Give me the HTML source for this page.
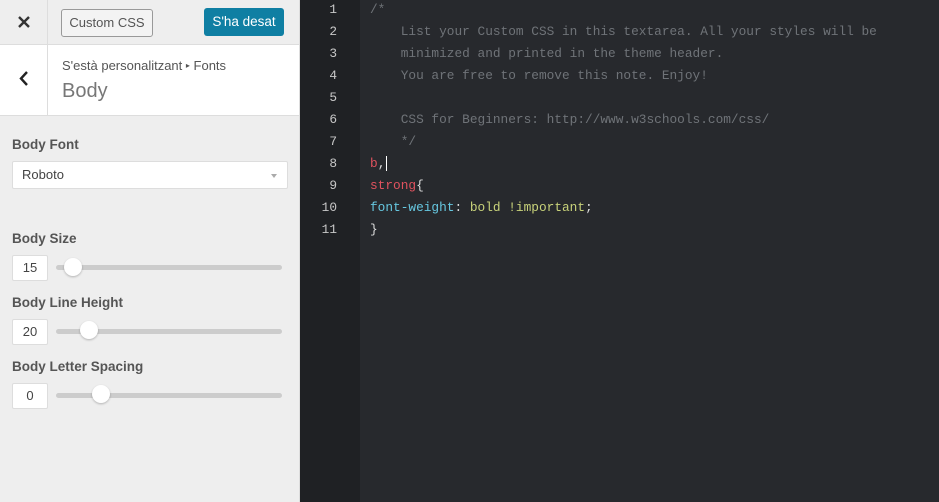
<!DOCTYPE html>
<html><head><meta charset="utf-8"><style>
*{margin:0;padding:0;box-sizing:border-box}
body{width:939px;height:502px;overflow:hidden;font-family:"Liberation Sans",sans-serif;background:#23252a;position:relative}
#side{position:absolute;left:0;top:0;width:300px;height:502px;background:#eeeeee;border-right:1px solid #ddd}
#top{position:absolute;left:0;top:0;width:299px;height:45px;border-bottom:1px solid #ddd;background:#eee}
#x{position:absolute;left:0;top:0;width:48px;height:45px;border-right:1px solid #ddd}
#ccss{position:absolute;left:61px;top:9px;width:92px;height:28px;border:1px solid #999;border-radius:3px;background:#f3f3f3;font-size:13px;color:#555;text-align:center;line-height:26px}
#saved{position:absolute;left:204px;top:8px;width:80px;height:28px;background:#0f7fa3;border-radius:3px;color:#fff;font-size:13.5px;text-align:center;line-height:28px}
#hdr{position:absolute;left:0;top:45px;width:299px;height:71px;background:#fff;border-bottom:1px solid #ddd}
#back{position:absolute;left:0;top:0;width:48px;height:70px;border-right:1px solid #ddd}
#crumb{position:absolute;left:62px;top:13px;font-size:13px;color:#555}
#ttl{position:absolute;left:62px;top:35px;font-size:20px;color:#777}
.lbl{position:absolute;left:12px;font-size:13.5px;color:#555;font-weight:bold}
#sel{position:absolute;left:12px;top:161px;width:276px;height:28px;background:#fff;border:1px solid #ddd;border-radius:2px;font-size:13px;color:#444;padding-left:9px;line-height:26px}
#sel:after{content:"";position:absolute;right:10px;top:12px;border:3px solid transparent;border-top:4px solid #aaa}
.num{position:absolute;left:12px;width:36px;height:26px;background:#fff;border:1px solid #ddd;border-radius:2px;font-size:13px;color:#444;text-align:center;line-height:24px}
.trk{position:absolute;left:56px;width:226px;height:5px;background:#ccc;border-radius:3px}
.kn{position:absolute;width:18px;height:18px;border-radius:50%;background:#fff;box-shadow:0 1px 2px rgba(0,0,0,.25)}
#gut{position:absolute;left:300px;top:0;width:60px;height:502px;background:#1f2124}
#code{position:absolute;left:360px;top:0;width:579px;height:502px;background:#27292d}
.ln{position:absolute;left:300px;width:37px;text-align:right;font-family:"Liberation Mono",monospace;font-size:12.8px;color:#c8c8c8}
.cl{position:absolute;left:370px;font-family:"Liberation Mono",monospace;font-size:12.8px;white-space:pre;color:#6f7378}
.r{color:#e0525e}.b{color:#66c7e0}.g{color:#c8d27a}.w{color:#ddd}
</style></head><body>
<div id="side">
<div id="top"><div id="x"><svg width="48" height="45"><path d="M19 17L29 27M29 17L19 27" stroke="#333" stroke-width="2.4"/></svg></div><div id="ccss">Custom CSS</div><div id="saved">S'ha desat</div></div>
<div id="hdr"><div id="back"><svg width="48" height="70"><path d="M27 27L21 33.5L27 40" stroke="#222" stroke-width="2.4" fill="none"/></svg></div><div id="crumb">S'està personalitzant <span style="font-size:8px;vertical-align:2px">▸</span> Fonts</div><div id="ttl">Body</div></div>
<div class="lbl" style="top:137px">Body Font</div>
<div id="sel">Roboto</div>
<div class="lbl" style="top:231px">Body Size</div>
<div class="num" style="top:255px">15</div><div class="trk" style="top:265px"></div><div class="kn" style="left:64px;top:258px"></div>
<div class="lbl" style="top:295px">Body Line Height</div>
<div class="num" style="top:319px">20</div><div class="trk" style="top:329px"></div><div class="kn" style="left:80px;top:321px"></div>
<div class="lbl" style="top:359px">Body Letter Spacing</div>
<div class="num" style="top:383px">0</div><div class="trk" style="top:393px"></div><div class="kn" style="left:92px;top:385px"></div>
</div>
<div id="gut"></div><div id="code"></div>
<div class="ln" style="top:2px">1</div>
<div class="ln" style="top:24px">2</div>
<div class="ln" style="top:46px">3</div>
<div class="ln" style="top:68px">4</div>
<div class="ln" style="top:90px">5</div>
<div class="ln" style="top:112px">6</div>
<div class="ln" style="top:134px">7</div>
<div class="ln" style="top:156px">8</div>
<div class="ln" style="top:178px">9</div>
<div class="ln" style="top:200px">10</div>
<div class="ln" style="top:222px">11</div>
<div class="cl" style="top:2px">/*</div>
<div class="cl" style="top:24px">    List your Custom CSS in this textarea. All your styles will be</div>
<div class="cl" style="top:46px">    minimized and printed in the theme header.</div>
<div class="cl" style="top:68px">    You are free to remove this note. Enjoy!</div>
<div class="cl" style="top:112px">    CSS for Beginners: http://www.w3schools.com/css/</div>
<div class="cl" style="top:134px">    */</div>
<div class="cl" style="top:156px"><span class="r">b</span><span class="w">,</span><span style="border-left:1px solid #fff;margin-left:1px"></span></div>
<div class="cl" style="top:178px"><span class="r">strong</span><span class="w">{</span></div>
<div class="cl" style="top:200px"><span class="b">font-weight</span><span class="w">: </span><span class="g">bold !important</span><span class="w">;</span></div>
<div class="cl" style="top:222px"><span class="w">}</span></div>
</body></html>
